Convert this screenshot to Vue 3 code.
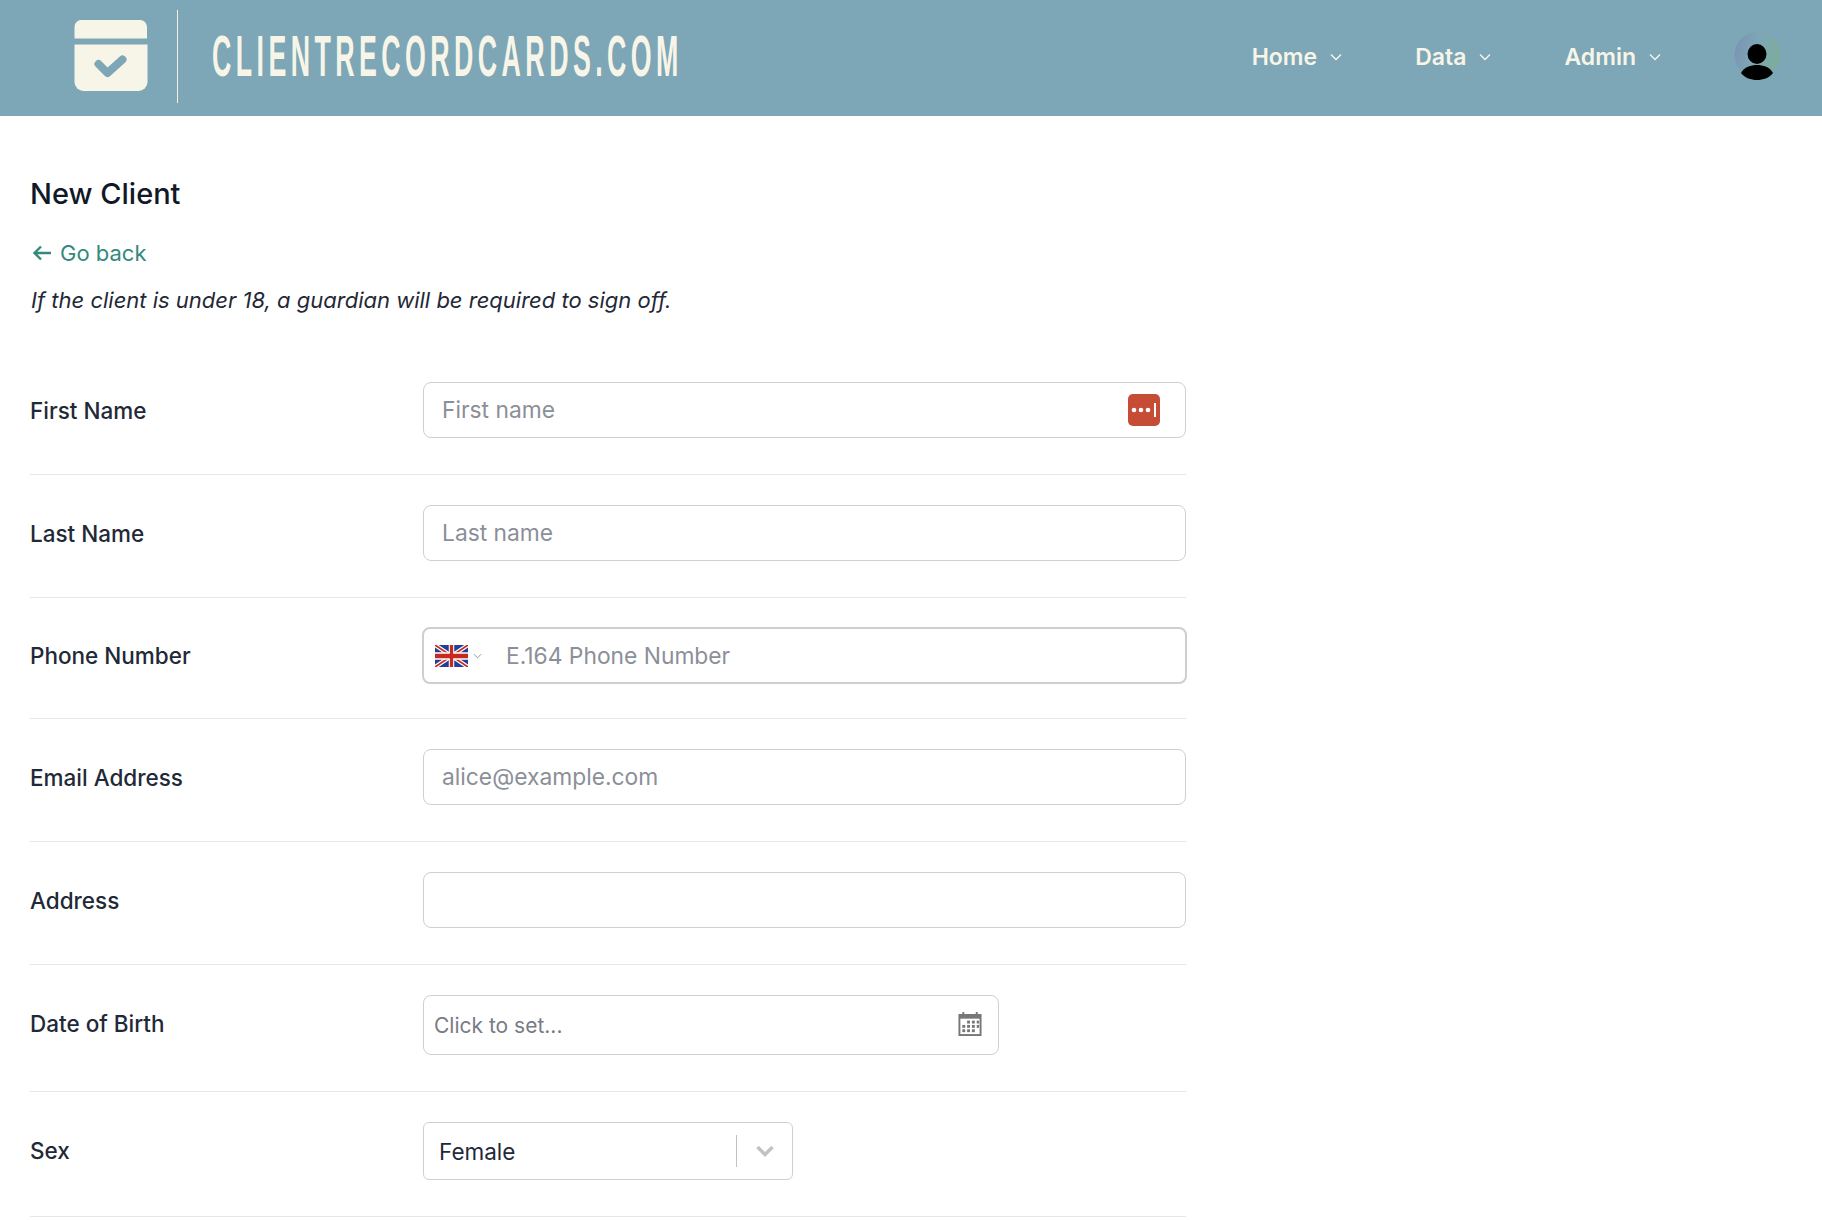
<script setup>
const navItems = ['Home', 'Data', 'Admin'];
</script>

<template>
  <div class="page">
    <header class="topbar">
      <div class="brand">
        <svg class="brand-icon" viewBox="0 0 74 72" width="74" height="72">
          <path d="M8 0H66a7 7 0 0 1 7 7V18.500H0.500V7a7 7 0 0 1 7.500-7Z" fill="#f7f5e8" />
          <path d="M0.500 24.500H73.500V62a9 9 0 0 1-9 9H9.500a9 9 0 0 1-9-9Z" fill="#f7f5e8" />
          <path d="M24.500 44L33.500 53L48.500 39.500" fill="none" stroke="#7da6b6" stroke-width="8" stroke-linecap="round" stroke-linejoin="round" />
        </svg>
        <div class="brand-rule"></div>
        <div class="brand-name">CLIENTRECORDCARDS.COM</div>
      </div>
      <nav class="nav">
        <a v-for="item in navItems" :key="item" class="nav-item">
          {{ item }}
          <svg viewBox="0 0 12 8" width="12" height="8"><path d="M1 1.500L6 6.500L11 1.500" fill="none" stroke="#f7f5e8" stroke-width="1.400" /></svg>
        </a>
        <div class="avatar">
          <svg viewBox="0 0 47 48" width="47" height="48">
            <defs>
              <linearGradient id="av" x1="0" x2="1" y1="0" y2="0.300">
                <stop offset="0" stop-color="#7a8fb4" />
                <stop offset="0.500" stop-color="#7da6b6" />
                <stop offset="1" stop-color="#7dac9f" />
              </linearGradient>
            </defs>
            <circle cx="23.500" cy="23" r="23" fill="url(#av)" />
            <ellipse cx="23" cy="22" rx="9.500" ry="10" fill="#000" />
            <path d="M7 41C10 35 17 33 23 33C29 33 36 35 39 41C35 46 29 48 23 48C17 48 11 46 7 41Z" fill="#000" />
          </svg>
        </div>
      </nav>
    </header>

    <main class="content">
      <h1 class="title">New Client</h1>
      <a class="back">
        <svg viewBox="0 0 20 16" width="20" height="16"><path d="M19 8H2.500M9 1.500L2.500 8L9 14.500" fill="none" stroke="#338a7c" stroke-width="2.400" /></svg>
        <span>Go back</span>
      </a>
      <p class="note">If the client is under 18, a guardian will be required to sign off.</p>

      <form class="form">
        <div class="row">
          <label>First Name</label>
          <div class="field">
            <input class="input" placeholder="First name" />
            <span class="pm-badge">
              <svg viewBox="0 0 32 32" width="32" height="32">
                <rect width="32" height="32" rx="5" fill="#c64c35" />
                <circle cx="6" cy="16" r="2.300" fill="#fff" />
                <circle cx="13" cy="16" r="2.300" fill="#fff" />
                <circle cx="20" cy="16" r="2.300" fill="#fff" />
                <rect x="26" y="9" width="2" height="14" fill="#fff" />
              </svg>
            </span>
          </div>
        </div>
        <div class="row">
          <label>Last Name</label>
          <div class="field"><input class="input" placeholder="Last name" /></div>
        </div>
        <div class="row row-phone">
          <label>Phone Number</label>
          <div class="phone">
            <svg class="flag" viewBox="0 0 60 30" width="33" height="22" preserveAspectRatio="none">
              <rect width="60" height="30" fill="#20409a" />
              <path d="M0 0L60 30M60 0L0 30" stroke="#fff" stroke-width="6" />
              <path d="M0 0L60 30M60 0L0 30" stroke="#c8281e" stroke-width="2.500" />
              <path d="M30 0V30M0 15H60" stroke="#fff" stroke-width="10" />
              <path d="M30 0V30M0 15H60" stroke="#c8281e" stroke-width="6" />
            </svg>
            <svg class="flag-arrow" viewBox="0 0 10 6" width="9" height="6"><path d="M1 1L5 5L9 1" fill="none" stroke="#8a8f98" stroke-width="1" /></svg>
            <input class="phone-input" placeholder="E.164 Phone Number" />
          </div>
        </div>
        <div class="row">
          <label>Email Address</label>
          <div class="field"><input class="input" placeholder="alice@example.com" /></div>
        </div>
        <div class="row">
          <label>Address</label>
          <div class="field"><input class="input" /></div>
        </div>
        <div class="row row-date">
          <label>Date of Birth</label>
          <div class="date">
            <span>Click to set...</span>
            <svg class="date-icon" viewBox="0 0 24 26" width="24" height="25">
              <path d="M0 3H4V1H6V3H18V1H20V3H24V26H0Z" fill="#777" />
              <rect x="2" y="8" width="20" height="16" fill="#fff" />
              <g fill="#777">
                <rect x="9" y="10" width="3" height="3" /><rect x="14" y="10" width="3" height="3" /><rect x="19" y="10" width="2.500" height="3" />
                <rect x="4" y="14.500" width="3" height="3" /><rect x="9" y="14.500" width="3" height="3" /><rect x="14" y="14.500" width="3" height="3" /><rect x="19" y="14.500" width="2.500" height="3" />
                <rect x="4" y="19" width="3" height="3" /><rect x="9" y="19" width="3" height="3" /><rect x="14" y="19" width="3" height="3" />
              </g>
            </svg>
          </div>
        </div>
        <div class="row row-sex">
          <label>Sex</label>
          <div class="select">
            <span class="select-value">Female</span>
            <span class="select-sep"></span>
            <svg viewBox="0 0 20 12" width="20" height="12"><path d="M2.500 2L10 9.500L17.500 2" fill="none" stroke="#c2c2c2" stroke-width="3.500" /></svg>
          </div>
        </div>
      </form>
    </main>
  </div>
</template>

<style>
html, body { margin: 0; background: #fff; }
</style>

<style scoped>
.page {
  font-family: Inter, "Noto Sans", sans-serif;
  color: #1f2937;
  height: 1220px;
  overflow: hidden;
}
.topbar {
  height: 116px;
  background: #7da6b6;
  display: flex;
  align-items: center;
  justify-content: space-between;
  padding: 0 41px 0 74px;
}
.brand { display: flex; align-items: center; margin-top: -3px; }
.brand-icon { display: block; margin-top: -1px; }
.brand-rule { width: 1px; height: 93px; background: #f2f1e4; margin-left: 29px; }
.brand-name {
  margin: -2px 0 0 34px;
  font-family: "Liberation Sans Narrow", "Liberation Sans", sans-serif;
  font-size: 57px;
  font-weight: 700;
  letter-spacing: 9.400px;
  color: #f7f5e8;
  transform: scaleX(0.47);
  transform-origin: left center;
  white-space: nowrap;
  width: 468px;
}
.nav { display: flex; align-items: center; margin-top: -2px; }
.nav-item {
  display: flex;
  align-items: center;
  gap: 13px;
  font-size: 23px;
  font-weight: 600;
  color: #f7f5e8;
  margin-right: 73px;
}
.avatar { display: flex; margin-top: -2px; }
.content { padding: 0 30px; }
.title {
  margin: 0;
  padding-top: 61px;
  font-size: 29px;
  line-height: 34px;
  font-weight: 500;
  color: #111827;
}
.back {
  display: flex;
  align-items: center;
  gap: 8px;
  margin-top: 28px;
  font-size: 22px;
  line-height: 28px;
  color: #338a7c;
}
.back svg { margin-left: 2px; }
.note {
  margin: 19px 0 0 1px;
  font-size: 22px;
  line-height: 28px;
  font-style: italic;
}
.form { width: 1156px; margin-top: 38px; }
.row {
  display: grid;
  grid-template-columns: 393px 1fr;
  align-items: center;
  padding: 30px 0 36px;
  border-bottom: 1px solid #e5e7eb;
}
.row label { font-size: 22.500px; font-weight: 500; color: #1f2937; }
.field { position: relative; display: flex; }
.input, .phone-input {
  font: inherit;
  font-size: 22.800px;
  color: #1f2937;
  outline: none;
}
.input::placeholder, .phone-input::placeholder { color: #8b8f98; opacity: 1; }
.input {
  width: 100%;
  height: 56px;
  box-sizing: border-box;
  padding: 0 18px 1px;
  border: 1px solid #cfcfd3;
  border-radius: 8px;
}
.pm-badge { position: absolute; right: 26px; top: 12px; display: flex; }
.row-phone { padding: 29px 0 34px; }
.row-phone .phone { height: 57px; }
.phone {
  display: flex;
  align-items: center;
  margin-left: -1px;
  margin-right: -1px;
  box-sizing: border-box;
  padding-left: 11px;
  border: 2px solid #cfcfd3;
  border-radius: 8px;
}
.flag { display: block; }
.flag-arrow { margin-left: 5px; }
.phone-input { flex: 1; border: 0; height: 100%; padding: 0 0 1px; margin-left: 24px; background: transparent; }
.row-date { padding-bottom: 36px; }
.row-date label { padding-bottom: 3px; }
.date {
  display: flex;
  align-items: center;
  justify-content: space-between;
  width: 576px;
  height: 60px;
  box-sizing: border-box;
  padding: 0 16px 0 10px;
  border: 1px solid #cfcfd3;
  border-radius: 8px;
  font-size: 21px;
  color: #777b84;
}
.date-icon { margin-top: -3px; }
.select {
  display: flex;
  align-items: center;
  width: 370px;
  height: 58px;
  box-sizing: border-box;
  padding: 0 17px 0 15px;
  border: 1px solid #cfcfd3;
  border-radius: 6px;
  font-size: 22.500px;
}
.select-value { flex: 1; }
.select-sep { width: 1px; height: 32px; background: #c2c2c2; margin-right: 18px; }
.row-sex label { padding-bottom: 1px; }
</style>
